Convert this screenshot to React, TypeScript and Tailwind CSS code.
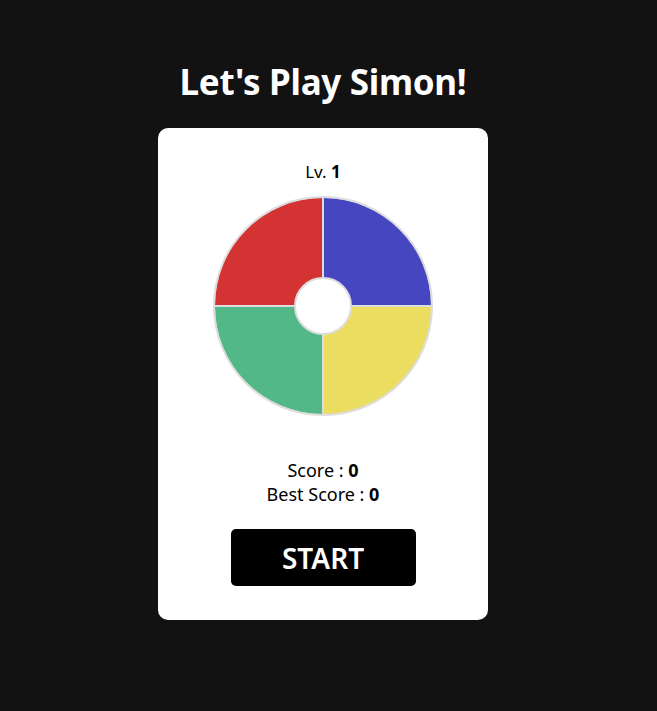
import React from "react";

export default function App() {
  return (
    <div
      className="min-h-[711px] w-full bg-[#121212] flex flex-col items-center pt-[60px] pr-[11px]"
      style={{ fontFamily: '"Noto Sans", "Open Sans", sans-serif' }}
    >
      <h1 className="text-[35px] leading-[44px] font-bold text-white tracking-[-0.3px] mb-[24px]">
        Let's Play Simon!
      </h1>
      <div className="w-[330px] bg-white rounded-[10px] flex flex-col items-center pt-[32px] pb-[34px]">
        <div className="text-[17px] leading-[24px] text-black">
          Lv. <span className="font-bold">1</span>
        </div>
        <div className="relative mt-[12px] w-[220px] h-[220px] rounded-full bg-[#dddddd] p-[2px]">
          <div className="w-full h-full grid grid-cols-2 grid-rows-2 gap-[2px] rounded-full overflow-hidden">
            <div className="bg-[#d33333] rounded-tl-full" />
            <div className="bg-[#4646c1] rounded-tr-full" />
            <div className="bg-[#53b888] rounded-bl-full" />
            <div className="bg-[#eadd5f] rounded-br-full" />
          </div>
          <div className="absolute left-1/2 top-1/2 -translate-x-1/2 -translate-y-1/2 w-[58px] h-[58px] rounded-full bg-white border-2 border-[#dddddd]" />
        </div>
        <div className="mt-[42px] text-[18px] leading-[24px] text-black text-center">
          <div>
            Score : <span className="font-bold">0</span>
          </div>
          <div>
            Best Score : <span className="font-bold">0</span>
          </div>
        </div>
        <button className="mt-[23px] w-[185px] h-[57px] bg-black text-white rounded-[5px] text-[28px] font-semibold">
          START
        </button>
      </div>
    </div>
  );
}
